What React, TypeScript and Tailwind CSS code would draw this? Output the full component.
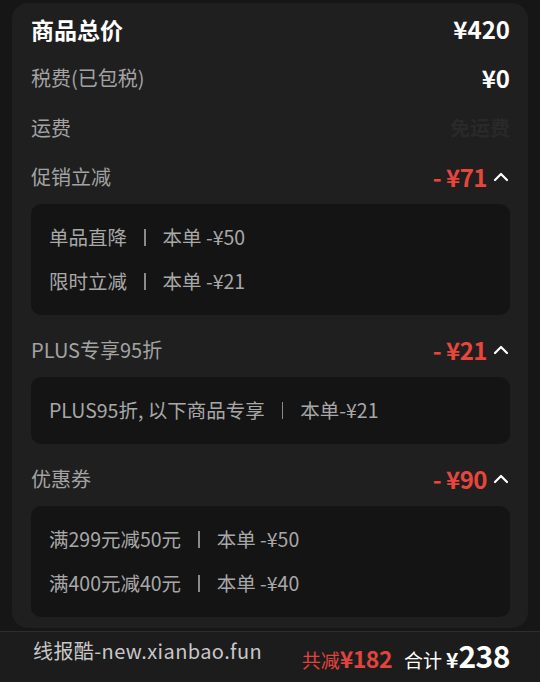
import { ChevronUp } from 'lucide-react'

const FONT = { fontFamily: '"Noto Sans CJK SC", "Noto Sans", sans-serif' }

interface Detail {
  title: string
  amount: string
  lines: [string, string][]
}

const details: Detail[] = [
  { title: '促销立减', amount: '¥71', lines: [['单品直降', '本单 -¥50'], ['限时立减', '本单 -¥21']] },
  { title: 'PLUS专享95折', amount: '¥21', lines: [['PLUS95折, 以下商品专享', '本单-¥21']] },
  { title: '优惠券', amount: '¥90', lines: [['满299元减50元', '本单 -¥50'], ['满400元减40元', '本单 -¥40']] },
]

function DetailBlock({ d }: { d: Detail }) {
  return (
    <div>
      <div className="flex items-center justify-between h-[49px]">
        <span className="text-[20px] text-[#a3a3a3] leading-none">{d.title}</span>
        <div className="flex items-center gap-[2px] -mr-[3px]">
          <span className="text-[24px] font-bold text-[#e8463c] leading-none tracking-[-0.5px]">- {d.amount}</span>
          <ChevronUp className="w-[24px] h-[24px] text-white" strokeWidth={2.2} />
        </div>
      </div>
      <div className="mt-[3px] mb-[10px] bg-[#141414] rounded-[10px] px-[18px] pt-[11px] pb-[12px] flex flex-col">
        {d.lines.map(([a, b]) => (
          <div key={a} className="flex items-center h-[44px] text-[19.5px] text-[#a8a8a8] leading-none">
            <span>{a}</span>
            <span className="w-[1.5px] h-[17px] bg-[#8a8a8a] mx-[17px]" />
            <span>{b}</span>
          </div>
        ))}
      </div>
    </div>
  )
}

export default function App() {
  return (
    <div className="w-[540px] h-[682px] bg-[#161616] flex flex-col overflow-hidden" style={FONT}>
      <div className="mx-[12px] mt-[3px] h-[625px] bg-[#1f1f1f] rounded-[16px] pl-[19px] pr-[18px] pt-[2px] flex flex-col">
        <div className="flex items-center justify-between h-[48px]">
          <span className="text-[23px] font-bold text-white leading-none">商品总价</span>
          <span className="text-[24px] font-bold text-white leading-none">¥420</span>
        </div>
        <div className="flex items-center justify-between h-[50px]">
          <span className="text-[20px] text-[#a3a3a3] leading-none">税费(已包税)</span>
          <span className="text-[24px] font-bold text-white leading-none">¥0</span>
        </div>
        <div className="flex items-center justify-between h-[49px]">
          <span className="text-[20px] text-[#a3a3a3] leading-none">运费</span>
          <span className="text-[20px] font-bold text-[#292929] leading-none">免运费</span>
        </div>
        {details.map((d) => (
          <DetailBlock key={d.title} d={d} />
        ))}
      </div>
      <div className="mt-[3px] flex-1 bg-[#1c1c1c] border-t border-[#2e2e2e] flex items-start justify-between pl-[33px] pr-[30px] pt-[4px]">
        <span className="text-[20px] text-[#c8c8c8] tracking-[0.4px]">线报酷-new.xianbao.fun</span>
        <div className="flex items-baseline mt-[4px] leading-none">
          <span className="text-[19px] text-[#e0443c]">共减</span>
          <span className="text-[23px] font-bold text-[#e0443c] tracking-[-0.5px]">¥182</span>
          <span className="text-[19px] text-white ml-[12px]">合计</span>
          <span className="text-[21px] font-bold text-white ml-[4px]">¥</span>
          <span className="text-[30px] font-bold text-white tracking-[-0.5px]">238</span>
        </div>
      </div>
    </div>
  )
}
